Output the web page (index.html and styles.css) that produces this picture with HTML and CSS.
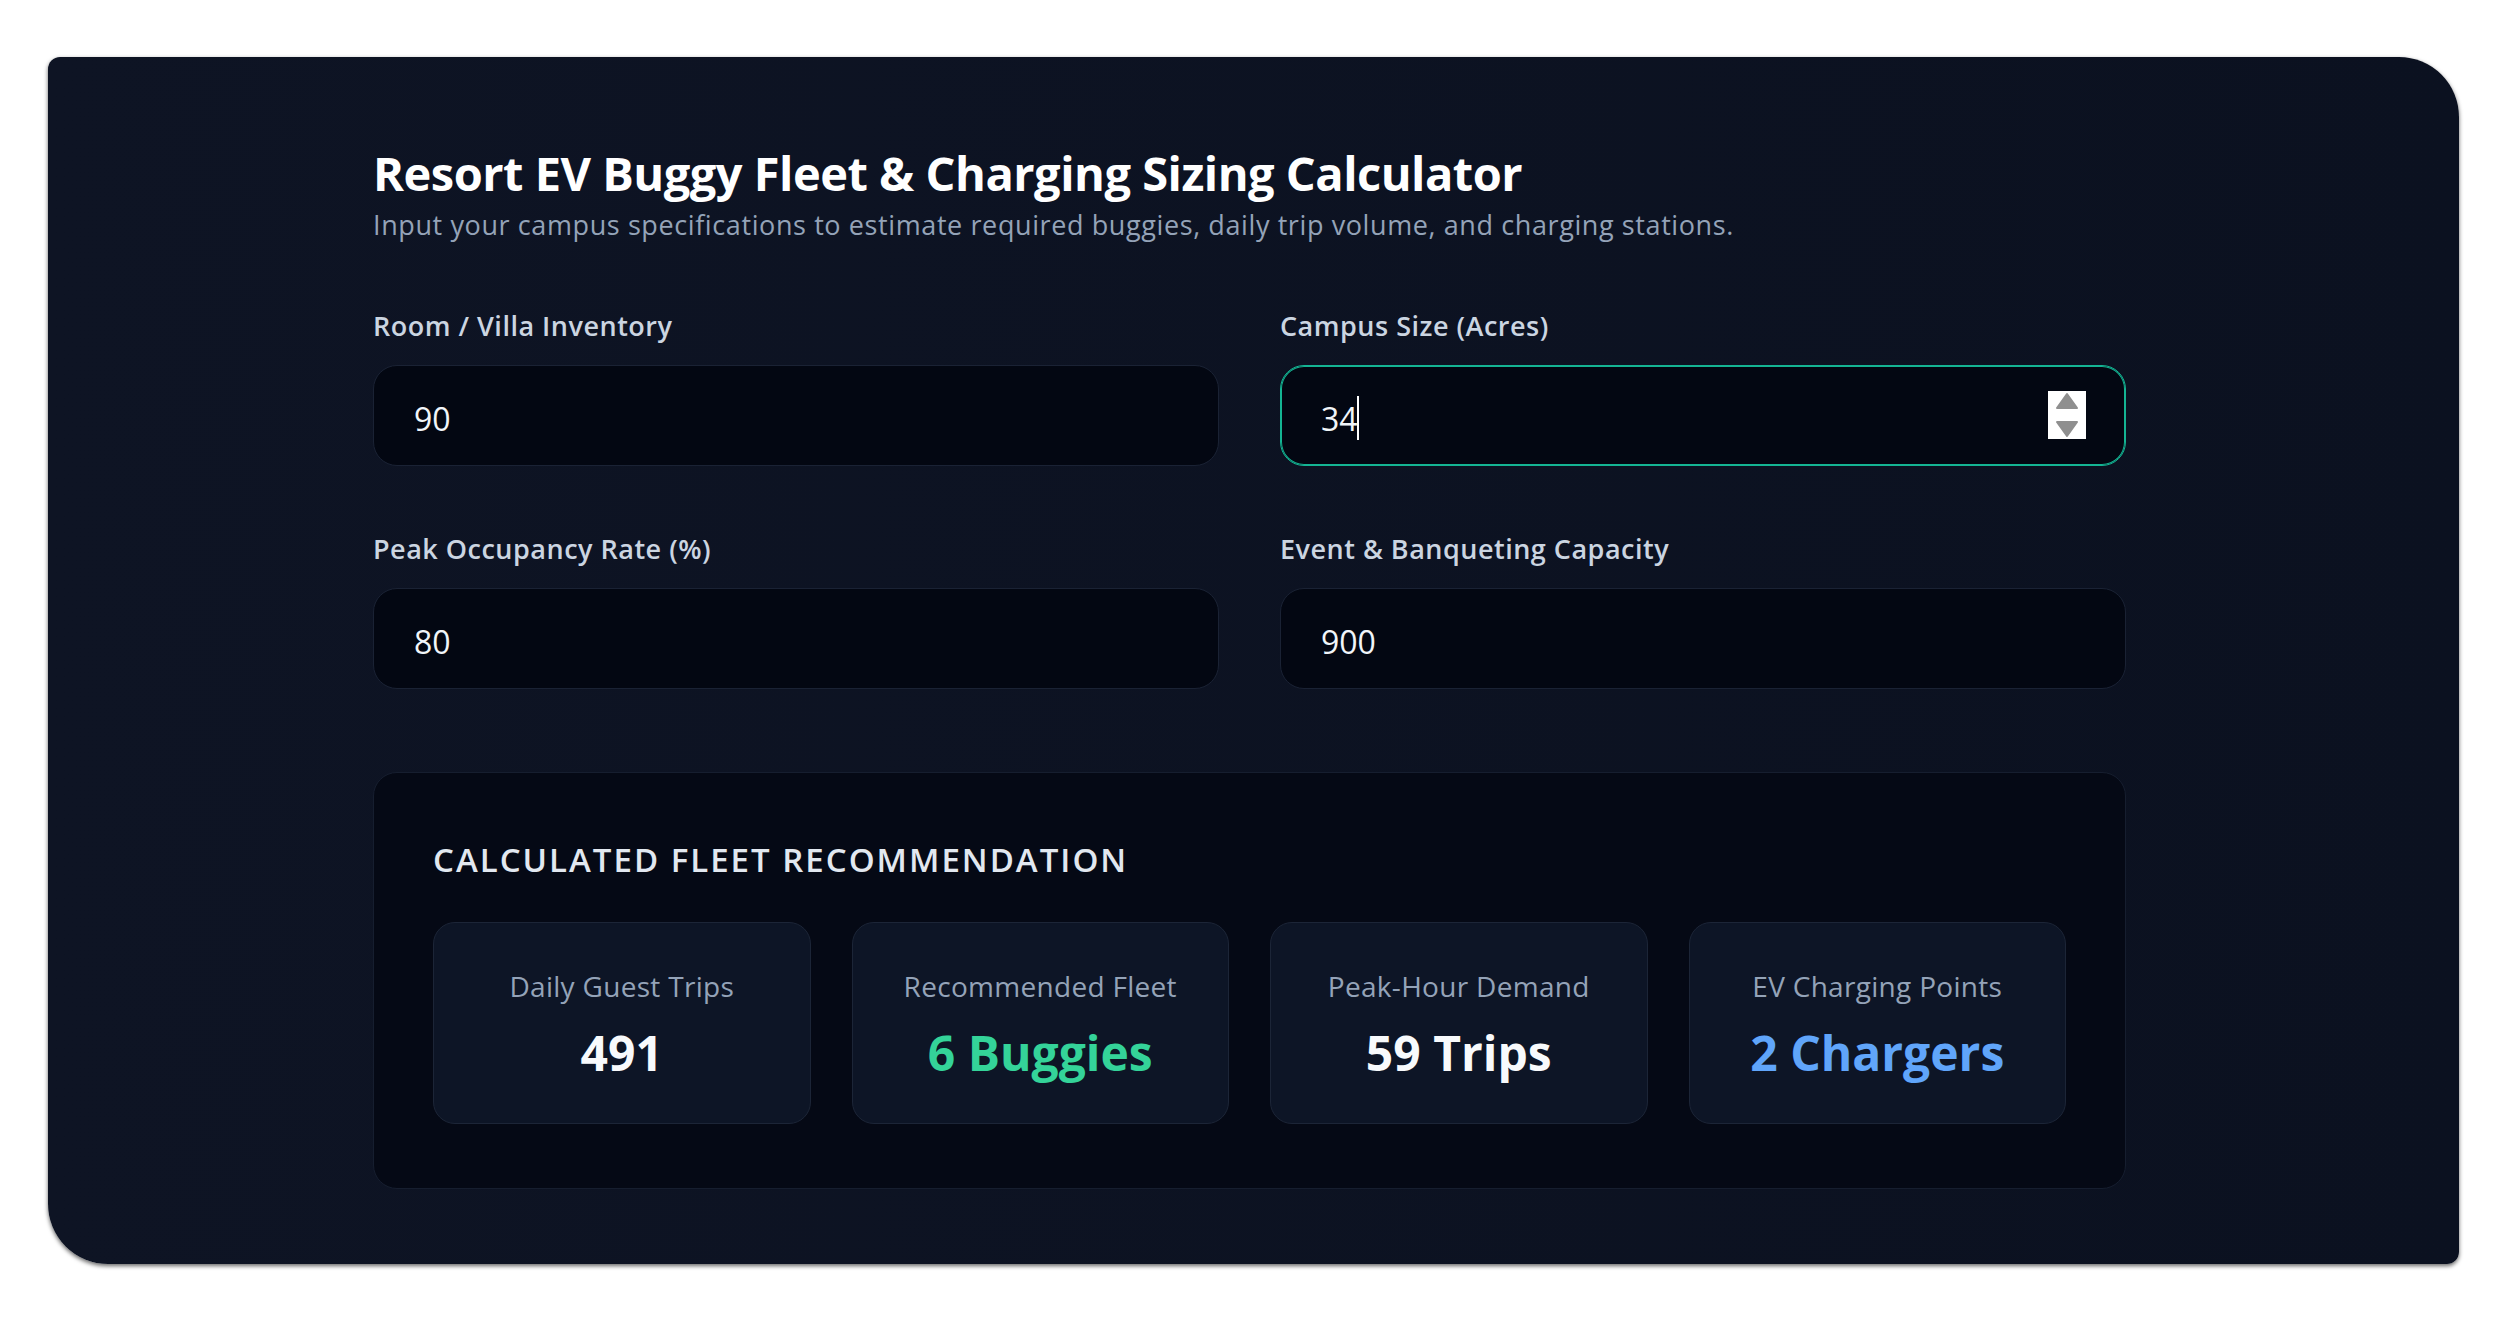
FILE: index.html
```html
<!DOCTYPE html>
<html lang="en">

<head>
    <meta charset="UTF-8">
    <meta name="viewport" content="width=device-width, initial-scale=1.0">
    <title>Resort EV Buggy Fleet &amp; Charging Sizing Calculator</title>
    <link rel="stylesheet" href="styles.css">
</head>

<body>
    <div class="frame">
        <div class="calculator">
            <div class="calc-header">
                <h1>Resort EV Buggy Fleet &amp; Charging Sizing Calculator</h1>
                <p>Input your campus specifications to estimate required buggies, daily trip volume, and charging stations.</p>
            </div>

            <div class="field-grid">
                <div class="field">
                    <label for="rooms">Room / Villa Inventory</label>
                    <input type="number" id="rooms" class="field-input" value="90">
                </div>
                <div class="field">
                    <label for="acres">Campus Size (Acres)</label>
                    <div class="input-wrap">
                        <input type="number" id="acres" class="field-input is-active" value="34">
                        <span class="caret"></span>
                        <span class="spinner">
                            <svg width="38" height="48" viewBox="0 0 38 48">
                                <rect width="38" height="48" fill="#ffffff" />
                                <path d="M19 3 L29 17 L9 17 Z" fill="#8f8f8f" stroke="#8f8f8f" stroke-width="2" stroke-linejoin="round" />
                                <path d="M9 31 L29 31 L19 45 Z" fill="#8f8f8f" stroke="#8f8f8f" stroke-width="2" stroke-linejoin="round" />
                            </svg>
                        </span>
                    </div>
                </div>
                <div class="field">
                    <label for="occupancy">Peak Occupancy Rate (%)</label>
                    <input type="number" id="occupancy" class="field-input" value="80">
                </div>
                <div class="field">
                    <label for="events">Event &amp; Banqueting Capacity</label>
                    <input type="number" id="events" class="field-input" value="900">
                </div>
            </div>

            <div class="results">
                <h3>CALCULATED FLEET RECOMMENDATION</h3>
                <div class="result-grid">
                    <div class="result-card">
                        <span class="result-label">Daily Guest Trips</span>
                        <span class="result-value">491</span>
                    </div>
                    <div class="result-card">
                        <span class="result-label">Recommended Fleet</span>
                        <span class="result-value green">6 Buggies</span>
                    </div>
                    <div class="result-card">
                        <span class="result-label">Peak-Hour Demand</span>
                        <span class="result-value">59 Trips</span>
                    </div>
                    <div class="result-card">
                        <span class="result-label">EV Charging Points</span>
                        <span class="result-value blue">2 Chargers</span>
                    </div>
                </div>
            </div>
        </div>
    </div>
</body>

</html>
```

FILE: styles.css
```css
body {
    margin: 0;
    padding: 57px 48px 59px;
    background: #ffffff;
    font-family: "Open Sans", "Noto Sans", sans-serif;
}

.frame {
    background: linear-gradient(to right, #0e1424, #0b1120);
    border-radius: 12px 60px 12px 60px;
    box-shadow: 0 2px 4px rgba(0, 0, 0, 0.6);
    padding: 88px 333px 75px 325px;
}

h1 {
    margin: 0;
    color: #ffffff;
    font-size: 47px;
    line-height: 56px;
    font-weight: 700;
    letter-spacing: -0.5px;
}

.calc-header p {
    margin: 8px 0 0;
    color: #94a3b8;
    font-size: 27px;
    line-height: 32px;
    letter-spacing: 0.6px;
}

.field-grid {
    display: grid;
    grid-template-columns: 1fr 1fr;
    column-gap: 61px;
    row-gap: 68px;
    margin-top: 70px;
}

.field label {
    display: block;
    margin-bottom: 24px;
    color: #cbd5e1;
    font-size: 27px;
    line-height: 30px;
    font-weight: 600;
    letter-spacing: 0.5px;
}

.input-wrap {
    position: relative;
}

.field-input {
    display: block;
    width: 100%;
    height: 101px;
    box-sizing: border-box;
    padding: 6px 40px 0;
    background: #030712;
    border: 1px solid #1a2234;
    border-radius: 24px;
    color: #f1f5f9;
    font-family: inherit;
    font-size: 32px;
    outline: none;
    -moz-appearance: textfield;
}

.field-input::-webkit-inner-spin-button,
.field-input::-webkit-outer-spin-button {
    -webkit-appearance: none;
    margin: 0;
}

.field-input.is-active {
    border-color: #14b493;
    box-shadow: inset 0 0 0 1px #14b493;
    caret-color: transparent;
}

.caret {
    position: absolute;
    left: 77px;
    top: 31px;
    width: 2px;
    height: 44px;
    background: #ffffff;
}

.spinner {
    position: absolute;
    right: 40px;
    top: 26px;
    display: flex;
}

.results {
    margin-top: 83px;
    padding: 59px 59px 64px;
    background: #050915;
    border: 1px solid #161e2f;
    border-radius: 24px;
}

.results h3 {
    margin: 0 0 34px;
    color: #e2e8f0;
    font-size: 33px;
    line-height: 56px;
    font-weight: 600;
    letter-spacing: 2px;
}

.result-grid {
    display: grid;
    grid-template-columns: repeat(4, 1fr);
    gap: 41px;
}

.result-card {
    display: flex;
    flex-direction: column;
    align-items: center;
    padding: 45px 20px 42px;
    background: #0d1526;
    border: 1px solid #1c2537;
    border-radius: 22px;
}

.result-label {
    color: #94a3b8;
    font-size: 28px;
    line-height: 36px;
    letter-spacing: 0.3px;
}

.result-value {
    margin-top: 21px;
    color: #f8fafc;
    font-size: 48px;
    line-height: 56px;
    font-weight: 700;
}

.result-value.green {
    color: #34d399;
}

.result-value.blue {
    color: #60a5fa;
}
```
